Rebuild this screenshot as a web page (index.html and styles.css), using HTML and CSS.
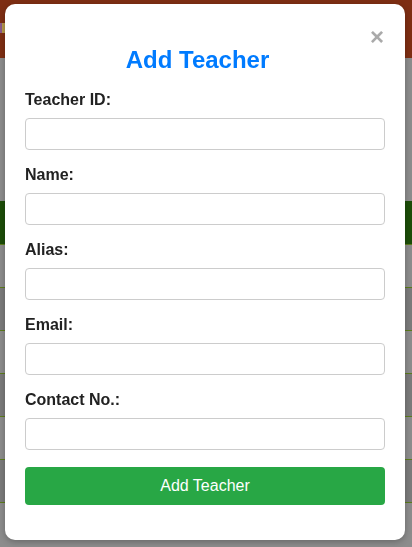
FILE: index.html
```html
<!DOCTYPE html>
<html>
<head>
<meta charset="utf-8">
<link rel="stylesheet" href="styles.css">
</head>
<body>
<div class="page">
  <div class="topbar"><span class="brand-mark"></span></div>
  <div class="spacer"></div>
  <div class="band"></div>
  <div class="row"></div>
  <div class="row dark"></div>
  <div class="row"></div>
  <div class="row dark"></div>
  <div class="row"></div>
  <div class="row dark"></div>
  <div class="row"></div>
</div>
<div class="modal">
  <div class="head">
    <h2 class="title">Add Teacher</h2>
    <span class="close">&times;</span>
  </div>
  <form class="form">
    <label class="label">Teacher ID:</label>
    <input class="input" type="text">
    <label class="label">Name:</label>
    <input class="input" type="text">
    <label class="label">Alias:</label>
    <input class="input" type="text">
    <label class="label">Email:</label>
    <input class="input" type="text">
    <label class="label">Contact No.:</label>
    <input class="input" type="text">
    <button class="btn" type="button">Add Teacher</button>
  </form>
</div>
</body>
</html>
```
FILE: styles.css
```css
html, body {
  margin: 0;
  padding: 0;
  width: 412px;
  height: 547px;
  overflow: hidden;
  font-family: "Liberation Sans", Arial, sans-serif;
}
.page {
  display: flex;
  flex-direction: column;
  height: 547px;
  background: #8c8c8c;
}
.topbar {
  height: 58px;
  background: #7e2e13;
  display: flex;
  align-items: center;
}
.brand-mark {
  width: 5px;
  height: 10px;
  margin-top: -2px;
  background: linear-gradient(90deg, #8a5a8a 0 2px, #b89a4a 2px 5px);
}
.spacer {
  height: 143px;
  background: #8c8c8c;
}
.band {
  height: 43px;
  background: #1c4d08;
}
.row {
  height: 42px;
  background: #8c8c8c;
  border-top: 1.5px solid #5c7c1c;
}
.row.dark {
  background: #7b7b7b;
}
.modal {
  position: fixed;
  left: 5px;
  top: 4px;
  width: 400px;
  height: 536px;
  box-sizing: border-box;
  background: #fff;
  border-radius: 10px;
  box-shadow: 0 2px 6px rgba(0, 0, 0, 0.25);
  padding: 20px;
}
.head {
  display: flex;
  align-items: flex-start;
}
.title {
  flex: 1;
  margin: 22px 0 0;
  text-align: center;
  color: #007bff;
  font-size: 24px;
  font-weight: bold;
  line-height: 28px;
}
.close {
  width: 14px;
  margin-top: -1px;
  margin-right: 1px;
  color: #aaa;
  font-size: 24px;
  font-weight: bold;
  line-height: 28px;
  text-align: center;
}
.form {
  display: flex;
  flex-direction: column;
  margin-top: 17px;
}
.label {
  display: block;
  font-size: 16px;
  font-weight: bold;
  color: #222;
  line-height: 18px;
  margin-bottom: 9px;
}
.input {
  height: 32px;
  box-sizing: border-box;
  border: 1px solid #ccc;
  border-radius: 4px;
  margin: 0 0 16px;
  padding: 0 8px;
  font-size: 16px;
}
.btn {
  margin-top: 1px;
  height: 38px;
  background: #28a745;
  color: #fff;
  border: none;
  border-radius: 4px;
  font-family: "Liberation Sans", Arial, sans-serif;
  font-size: 16px;
}
```
